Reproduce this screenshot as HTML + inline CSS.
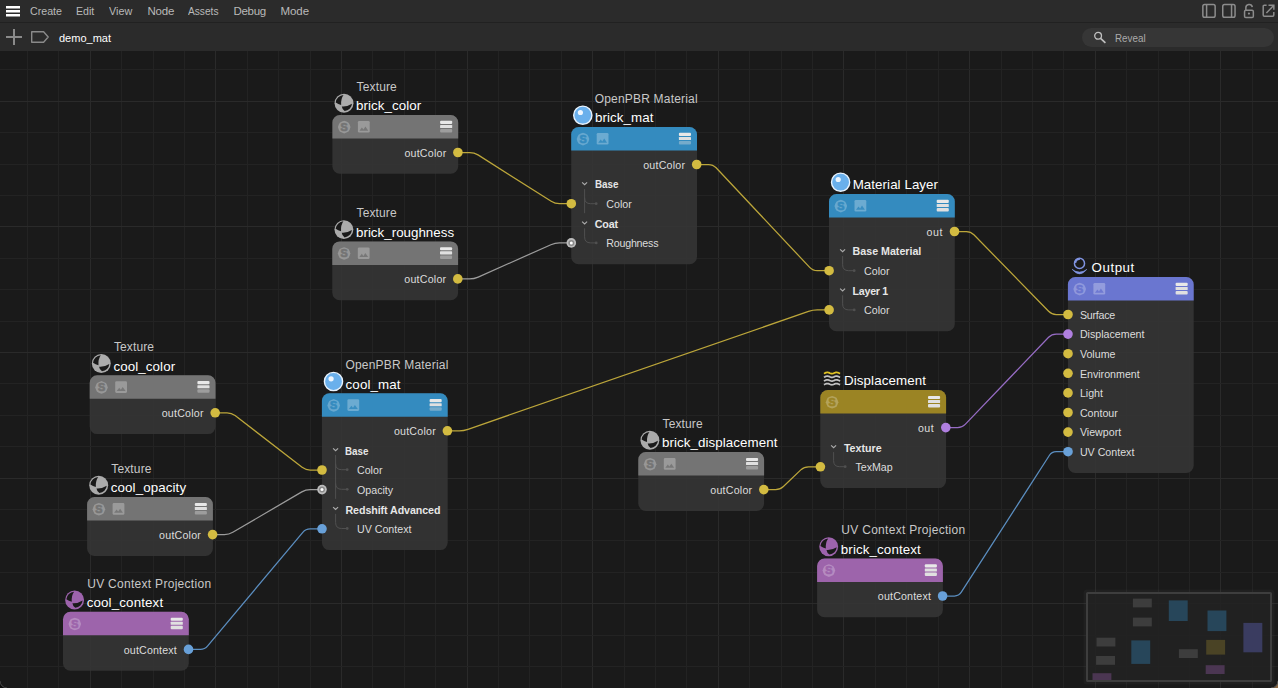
<!DOCTYPE html><html><head><meta charset="utf-8"><title>Node Editor - demo_mat</title><style>
html,body{margin:0;padding:0;background:#1a1a1a;overflow:hidden}
body{width:1278px;height:688px;position:relative;font-family:"Liberation Sans", sans-serif;}
.t{position:absolute;line-height:0;white-space:nowrap}
#menubar{position:absolute;left:0;top:0;width:1278px;height:22px;background:#2b2b2b}
#sep{position:absolute;left:0;top:22px;width:1278px;height:1px;background:#212121}
#toolbar{position:absolute;left:0;top:23px;width:1278px;height:28px;background:#2b2b2b}
#canvas{position:absolute;left:0;top:0;width:1278px;height:688px;overflow:hidden}
svg.full{position:absolute;left:0;top:0}
.node{position:absolute}
.hd{position:absolute;left:0;top:0;right:0;height:23.4px}
.ic{position:absolute}
#search{position:absolute;left:1082px;top:28px;width:192px;height:19px;border-radius:9.5px;background:#363636}
#minimap{position:absolute;left:1086px;top:592px;width:186px;height:90px;box-sizing:border-box;border:2px solid #3e3e3e;border-radius:1.5px;background:rgba(34,34,34,.9);overflow:hidden;box-shadow:0 0 0 2.5px rgba(70,70,70,.16)}

</style></head><body>
<div id="canvas">
<svg class="full" width="1278" height="688"><rect x="27" y="51" width="1" height="637" fill="#232323"/><rect x="58" y="51" width="1" height="637" fill="#232323"/><rect x="90" y="51" width="1" height="637" fill="#2a2a2a"/><rect x="121" y="51" width="1" height="637" fill="#232323"/><rect x="153" y="51" width="1" height="637" fill="#232323"/><rect x="184" y="51" width="1" height="637" fill="#232323"/><rect x="215" y="51" width="1" height="637" fill="#2a2a2a"/><rect x="247" y="51" width="1" height="637" fill="#232323"/><rect x="278" y="51" width="1" height="637" fill="#232323"/><rect x="310" y="51" width="1" height="637" fill="#232323"/><rect x="341" y="51" width="1" height="637" fill="#2a2a2a"/><rect x="372" y="51" width="1" height="637" fill="#232323"/><rect x="404" y="51" width="1" height="637" fill="#232323"/><rect x="435" y="51" width="1" height="637" fill="#232323"/><rect x="467" y="51" width="1" height="637" fill="#2a2a2a"/><rect x="498" y="51" width="1" height="637" fill="#232323"/><rect x="529" y="51" width="1" height="637" fill="#232323"/><rect x="561" y="51" width="1" height="637" fill="#232323"/><rect x="592" y="51" width="1" height="637" fill="#2a2a2a"/><rect x="624" y="51" width="1" height="637" fill="#232323"/><rect x="655" y="51" width="1" height="637" fill="#232323"/><rect x="686" y="51" width="1" height="637" fill="#232323"/><rect x="718" y="51" width="1" height="637" fill="#2a2a2a"/><rect x="749" y="51" width="1" height="637" fill="#232323"/><rect x="781" y="51" width="1" height="637" fill="#232323"/><rect x="812" y="51" width="1" height="637" fill="#232323"/><rect x="843" y="51" width="1" height="637" fill="#2a2a2a"/><rect x="875" y="51" width="1" height="637" fill="#232323"/><rect x="906" y="51" width="1" height="637" fill="#232323"/><rect x="938" y="51" width="1" height="637" fill="#232323"/><rect x="969" y="51" width="1" height="637" fill="#2a2a2a"/><rect x="1001" y="51" width="1" height="637" fill="#232323"/><rect x="1032" y="51" width="1" height="637" fill="#232323"/><rect x="1063" y="51" width="1" height="637" fill="#232323"/><rect x="1095" y="51" width="1" height="637" fill="#2a2a2a"/><rect x="1126" y="51" width="1" height="637" fill="#232323"/><rect x="1158" y="51" width="1" height="637" fill="#232323"/><rect x="1189" y="51" width="1" height="637" fill="#232323"/><rect x="1220" y="51" width="1" height="637" fill="#2a2a2a"/><rect x="1252" y="51" width="1" height="637" fill="#232323"/><rect x="0" y="69" width="1278" height="1" fill="#232323"/><rect x="0" y="101" width="1278" height="1" fill="#2a2a2a"/><rect x="0" y="132" width="1278" height="1" fill="#232323"/><rect x="0" y="164" width="1278" height="1" fill="#232323"/><rect x="0" y="195" width="1278" height="1" fill="#232323"/><rect x="0" y="226" width="1278" height="1" fill="#2a2a2a"/><rect x="0" y="258" width="1278" height="1" fill="#232323"/><rect x="0" y="289" width="1278" height="1" fill="#232323"/><rect x="0" y="321" width="1278" height="1" fill="#232323"/><rect x="0" y="352" width="1278" height="1" fill="#2a2a2a"/><rect x="0" y="383" width="1278" height="1" fill="#232323"/><rect x="0" y="415" width="1278" height="1" fill="#232323"/><rect x="0" y="446" width="1278" height="1" fill="#232323"/><rect x="0" y="478" width="1278" height="1" fill="#2a2a2a"/><rect x="0" y="509" width="1278" height="1" fill="#232323"/><rect x="0" y="540" width="1278" height="1" fill="#232323"/><rect x="0" y="572" width="1278" height="1" fill="#232323"/><rect x="0" y="603" width="1278" height="1" fill="#2a2a2a"/><rect x="0" y="635" width="1278" height="1" fill="#232323"/><rect x="0" y="666" width="1278" height="1" fill="#232323"/></svg>
<svg class="full" width="1278" height="688"><rect x="332.40" y="115.00" width="125.80" height="58.80" rx="7.5" fill="#353535" fill-opacity=".88"/><path d="M332.40 138.50 V122.50 A7.5 7.5 0 0 1 339.90 115.00 H450.70 A7.5 7.5 0 0 1 458.20 122.50 V138.50Z" fill="#747474"/><rect x="332.30" y="241.40" width="125.80" height="58.80" rx="7.5" fill="#353535" fill-opacity=".88"/><path d="M332.30 264.90 V248.90 A7.5 7.5 0 0 1 339.80 241.40 H450.60 A7.5 7.5 0 0 1 458.10 248.90 V264.90Z" fill="#747474"/><rect x="571.20" y="127.00" width="125.80" height="137.20" rx="7.5" fill="#353535" fill-opacity=".88"/><path d="M571.20 150.50 V134.50 A7.5 7.5 0 0 1 578.70 127.00 H689.50 A7.5 7.5 0 0 1 697.00 134.50 V150.50Z" fill="#348bbf"/><rect x="829.00" y="194.00" width="125.80" height="137.20" rx="7.5" fill="#353535" fill-opacity=".88"/><path d="M829.00 217.50 V201.50 A7.5 7.5 0 0 1 836.50 194.00 H947.30 A7.5 7.5 0 0 1 954.80 201.50 V217.50Z" fill="#348bbf"/><rect x="1067.90" y="277.00" width="125.80" height="196.00" rx="7.5" fill="#353535" fill-opacity=".88"/><path d="M1067.90 300.50 V284.50 A7.5 7.5 0 0 1 1075.40 277.00 H1186.20 A7.5 7.5 0 0 1 1193.70 284.50 V300.50Z" fill="#6a76d0"/><rect x="89.70" y="375.30" width="125.80" height="58.80" rx="7.5" fill="#353535" fill-opacity=".88"/><path d="M89.70 398.80 V382.80 A7.5 7.5 0 0 1 97.20 375.30 H208.00 A7.5 7.5 0 0 1 215.50 382.80 V398.80Z" fill="#747474"/><rect x="87.10" y="497.10" width="125.80" height="58.80" rx="7.5" fill="#353535" fill-opacity=".88"/><path d="M87.10 520.60 V504.60 A7.5 7.5 0 0 1 94.60 497.10 H205.40 A7.5 7.5 0 0 1 212.90 504.60 V520.60Z" fill="#747474"/><rect x="63.00" y="611.85" width="125.80" height="58.80" rx="7.5" fill="#353535" fill-opacity=".88"/><path d="M63.00 635.35 V619.35 A7.5 7.5 0 0 1 70.50 611.85 H181.30 A7.5 7.5 0 0 1 188.80 619.35 V635.35Z" fill="#9d64ab"/><rect x="321.90" y="393.30" width="125.80" height="156.80" rx="7.5" fill="#353535" fill-opacity=".88"/><path d="M321.90 416.80 V400.80 A7.5 7.5 0 0 1 329.40 393.30 H440.20 A7.5 7.5 0 0 1 447.70 400.80 V416.80Z" fill="#348bbf"/><rect x="820.30" y="390.10" width="125.80" height="98.00" rx="7.5" fill="#353535" fill-opacity=".88"/><path d="M820.30 413.60 V397.60 A7.5 7.5 0 0 1 827.80 390.10 H938.60 A7.5 7.5 0 0 1 946.10 397.60 V413.60Z" fill="#9b8424"/><rect x="638.30" y="452.10" width="125.80" height="58.80" rx="7.5" fill="#353535" fill-opacity=".88"/><path d="M638.30 475.60 V459.60 A7.5 7.5 0 0 1 645.80 452.10 H756.60 A7.5 7.5 0 0 1 764.10 459.60 V475.60Z" fill="#747474"/><rect x="817.10" y="558.50" width="125.80" height="58.80" rx="7.5" fill="#353535" fill-opacity=".88"/><path d="M817.10 582.00 V566.00 A7.5 7.5 0 0 1 824.60 558.50 H935.40 A7.5 7.5 0 0 1 942.90 566.00 V582.00Z" fill="#9d64ab"/></svg>
<div class="node" style="left:332.4px;top:115px;width:125.8px;height:58.8px"><div class="hd"></div><span class="t" style="right:11.8px;top:38.00px;font-size:10.67px;color:#dcdcdc;letter-spacing:0.215px;">outColor</span></div><span class="t" style="left:356.60px;top:87.00px;font-size:12px;color:#c8c8c8;letter-spacing:0.134px;">Texture</span><span class="t" style="left:356.10px;top:105.50px;font-size:13.33px;color:#ffffff;letter-spacing:0.059px;">brick_color</span><div class="node" style="left:332.3px;top:241.4px;width:125.8px;height:58.8px"><div class="hd"></div><span class="t" style="right:11.8px;top:37.60px;font-size:10.67px;color:#dcdcdc;letter-spacing:0.215px;">outColor</span></div><span class="t" style="left:356.50px;top:213.00px;font-size:12px;color:#c8c8c8;letter-spacing:0.134px;">Texture</span><span class="t" style="left:356.00px;top:232.50px;font-size:13.33px;color:#ffffff;letter-spacing:0.020px;">brick_roughness</span><div class="node" style="left:571.2px;top:127px;width:125.8px;height:137.2px"><div class="hd"></div><span class="t" style="right:11.8px;top:38.00px;font-size:10.67px;color:#dcdcdc;letter-spacing:0.215px;">outColor</span><span class="t" style="left:23.60px;top:57.00px;font-size:10.67px;color:#e6e6e6;font-weight:700;transform:scaleX(0.9221);transform-origin:0 0;">Base</span><span class="t" style="left:35.10px;top:77.00px;font-size:10.67px;color:#dcdcdc;">Color</span><span class="t" style="left:23.60px;top:97.00px;font-size:10.67px;color:#e6e6e6;font-weight:700;letter-spacing:-0.122px;">Coat</span><span class="t" style="left:35.10px;top:116.00px;font-size:10.67px;color:#dcdcdc;letter-spacing:-0.214px;">Roughness</span><svg class="ic" style="left:0;top:0" width="125.8" height="137.2" fill="none" stroke="#505050" stroke-width="1"><path d="M11.1 55.4 L13.6 57.7 L16.1 55.4" stroke="#acacac" stroke-width="1.15"/><path d="M13.6 62.1 V70.7 Q13.6 76.7 19.6 76.7 H24"/><path d="M13.6 70.2 V86.2"/><circle cx="25.2" cy="76.7" r="1.4" fill="#505050" stroke="none"/><path d="M11.1 94.6 L13.6 96.9 L16.1 94.6" stroke="#acacac" stroke-width="1.15"/><path d="M13.6 101.3 V109.9 Q13.6 115.9 19.6 115.9 H24"/><circle cx="25.2" cy="115.9" r="1.4" fill="#505050" stroke="none"/></svg></div><span class="t" style="left:594.70px;top:99.00px;font-size:12px;color:#c8c8c8;letter-spacing:0.191px;">OpenPBR Material</span><span class="t" style="left:594.90px;top:117.50px;font-size:13.33px;color:#ffffff;letter-spacing:0.091px;">brick_mat</span><div class="node" style="left:829px;top:194.0px;width:125.8px;height:137.2px"><div class="hd"></div><span class="t" style="right:11.8px;top:38.00px;font-size:10.67px;color:#dcdcdc;letter-spacing:0.524px;">out</span><span class="t" style="left:23.60px;top:57.00px;font-size:10.67px;color:#e6e6e6;font-weight:700;">Base Material</span><span class="t" style="left:35.10px;top:77.00px;font-size:10.67px;color:#dcdcdc;">Color</span><span class="t" style="left:23.60px;top:97.00px;font-size:10.67px;color:#e6e6e6;font-weight:700;letter-spacing:-0.275px;">Layer 1</span><span class="t" style="left:35.10px;top:116.00px;font-size:10.67px;color:#dcdcdc;">Color</span><svg class="ic" style="left:0;top:0" width="125.8" height="137.2" fill="none" stroke="#505050" stroke-width="1"><path d="M11.1 55.4 L13.6 57.7 L16.1 55.4" stroke="#acacac" stroke-width="1.15"/><path d="M13.6 62.1 V70.7 Q13.6 76.7 19.6 76.7 H24"/><circle cx="25.2" cy="76.7" r="1.4" fill="#505050" stroke="none"/><path d="M11.1 94.6 L13.6 96.9 L16.1 94.6" stroke="#acacac" stroke-width="1.15"/><path d="M13.6 101.3 V109.9 Q13.6 115.9 19.6 115.9 H24"/><circle cx="25.2" cy="115.9" r="1.4" fill="#505050" stroke="none"/></svg></div><span class="t" style="left:852.70px;top:184.50px;font-size:13.33px;color:#ffffff;letter-spacing:0.068px;">Material Layer</span><div class="node" style="left:1067.9px;top:277.0px;width:125.8px;height:196.0px"><div class="hd"></div><span class="t" style="left:12.00px;top:38.00px;font-size:10.67px;color:#dcdcdc;letter-spacing:-0.219px;">Surface</span><span class="t" style="left:12.00px;top:57.00px;font-size:10.67px;color:#dcdcdc;">Displacement</span><span class="t" style="left:12.00px;top:77.00px;font-size:10.67px;color:#dcdcdc;">Volume</span><span class="t" style="left:12.00px;top:97.00px;font-size:10.67px;color:#dcdcdc;">Environment</span><span class="t" style="left:12.00px;top:116.00px;font-size:10.67px;color:#dcdcdc;">Light</span><span class="t" style="left:12.00px;top:136.00px;font-size:10.67px;color:#dcdcdc;">Contour</span><span class="t" style="left:12.00px;top:155.00px;font-size:10.67px;color:#dcdcdc;">Viewport</span><span class="t" style="left:12.00px;top:175.00px;font-size:10.67px;color:#dcdcdc;">UV Context</span></div><span class="t" style="left:1091.60px;top:267.50px;font-size:13.33px;color:#ffffff;letter-spacing:0.531px;">Output</span><div class="node" style="left:89.7px;top:375.3px;width:125.8px;height:58.8px"><div class="hd"></div><span class="t" style="right:11.8px;top:37.70px;font-size:10.67px;color:#dcdcdc;letter-spacing:0.215px;">outColor</span></div><span class="t" style="left:113.90px;top:347.00px;font-size:12px;color:#c8c8c8;letter-spacing:0.134px;">Texture</span><span class="t" style="left:113.40px;top:366.50px;font-size:13.33px;color:#ffffff;letter-spacing:0.113px;">cool_color</span><div class="node" style="left:87.1px;top:497.1px;width:125.8px;height:58.8px"><div class="hd"></div><span class="t" style="right:11.8px;top:37.90px;font-size:10.67px;color:#dcdcdc;letter-spacing:0.215px;">outColor</span></div><span class="t" style="left:111.30px;top:469.00px;font-size:12px;color:#c8c8c8;letter-spacing:0.134px;">Texture</span><span class="t" style="left:110.80px;top:487.50px;font-size:13.33px;color:#ffffff;letter-spacing:0.109px;">cool_opacity</span><div class="node" style="left:63px;top:611.85px;width:125.8px;height:58.8px"><div class="hd"></div><span class="t" style="right:11.8px;top:38.15px;font-size:10.67px;color:#dcdcdc;letter-spacing:0.175px;">outContext</span></div><span class="t" style="left:87.20px;top:584.00px;font-size:12px;color:#c8c8c8;letter-spacing:0.292px;">UV Context Projection</span><span class="t" style="left:86.70px;top:602.50px;font-size:13.33px;color:#ffffff;letter-spacing:0.146px;">cool_context</span><div class="node" style="left:321.9px;top:393.3px;width:125.8px;height:156.8px"><div class="hd"></div><span class="t" style="right:11.8px;top:37.70px;font-size:10.67px;color:#dcdcdc;letter-spacing:0.215px;">outColor</span><span class="t" style="left:23.60px;top:57.70px;font-size:10.67px;color:#e6e6e6;font-weight:700;transform:scaleX(0.9221);transform-origin:0 0;">Base</span><span class="t" style="left:35.10px;top:76.70px;font-size:10.67px;color:#dcdcdc;">Color</span><span class="t" style="left:35.10px;top:96.70px;font-size:10.67px;color:#dcdcdc;">Opacity</span><span class="t" style="left:23.60px;top:116.70px;font-size:10.67px;color:#e6e6e6;font-weight:700;letter-spacing:-0.072px;">Redshift Advanced</span><span class="t" style="left:35.10px;top:135.70px;font-size:10.67px;color:#dcdcdc;">UV Context</span><svg class="ic" style="left:0;top:0" width="125.8" height="156.8" fill="none" stroke="#505050" stroke-width="1"><path d="M11.1 55.4 L13.6 57.7 L16.1 55.4" stroke="#acacac" stroke-width="1.15"/><path d="M13.6 62.1 V70.7 Q13.6 76.7 19.6 76.7 H24"/><circle cx="25.2" cy="76.7" r="1.4" fill="#505050" stroke="none"/><path d="M13.6 70.2 V90.3 Q13.6 96.3 19.6 96.3 H24"/><path d="M13.6 89.8 V105.8"/><circle cx="25.2" cy="96.3" r="1.4" fill="#505050" stroke="none"/><path d="M11.1 114.2 L13.6 116.5 L16.1 114.2" stroke="#acacac" stroke-width="1.15"/><path d="M13.6 120.9 V129.5 Q13.6 135.5 19.6 135.5 H24"/><circle cx="25.2" cy="135.5" r="1.4" fill="#505050" stroke="none"/></svg></div><span class="t" style="left:345.40px;top:365.00px;font-size:12px;color:#c8c8c8;letter-spacing:0.191px;">OpenPBR Material</span><span class="t" style="left:345.60px;top:384.50px;font-size:13.33px;color:#ffffff;letter-spacing:0.113px;">cool_mat</span><div class="node" style="left:820.3px;top:390.1px;width:125.8px;height:98.0px"><div class="hd"></div><span class="t" style="right:11.8px;top:37.90px;font-size:10.67px;color:#dcdcdc;letter-spacing:0.524px;">out</span><span class="t" style="left:23.60px;top:57.90px;font-size:10.67px;color:#e6e6e6;font-weight:700;">Texture</span><span class="t" style="left:35.10px;top:76.90px;font-size:10.67px;color:#dcdcdc;">TexMap</span><svg class="ic" style="left:0;top:0" width="125.8" height="98.0" fill="none" stroke="#505050" stroke-width="1"><path d="M11.1 55.4 L13.6 57.7 L16.1 55.4" stroke="#acacac" stroke-width="1.15"/><path d="M13.6 62.1 V70.7 Q13.6 76.7 19.6 76.7 H24"/><circle cx="25.2" cy="76.7" r="1.4" fill="#505050" stroke="none"/></svg></div><span class="t" style="left:844.00px;top:380.50px;font-size:13.33px;color:#ffffff;letter-spacing:0.113px;">Displacement</span><div class="node" style="left:638.3px;top:452.1px;width:125.8px;height:58.8px"><div class="hd"></div><span class="t" style="right:11.8px;top:37.90px;font-size:10.67px;color:#dcdcdc;letter-spacing:0.215px;">outColor</span></div><span class="t" style="left:662.50px;top:424.00px;font-size:12px;color:#c8c8c8;letter-spacing:0.134px;">Texture</span><span class="t" style="left:662.00px;top:442.50px;font-size:13.33px;color:#ffffff;letter-spacing:0.078px;">brick_displacement</span><div class="node" style="left:817.1px;top:558.5px;width:125.8px;height:58.8px"><div class="hd"></div><span class="t" style="right:11.8px;top:37.50px;font-size:10.67px;color:#dcdcdc;letter-spacing:0.175px;">outContext</span></div><span class="t" style="left:841.30px;top:530.00px;font-size:12px;color:#c8c8c8;letter-spacing:0.292px;">UV Context Projection</span><span class="t" style="left:840.80px;top:549.50px;font-size:13.33px;color:#ffffff;letter-spacing:0.121px;">brick_context</span>
<svg class="full" width="1278" height="688" style="pointer-events:none"><g fill="none" stroke-width="1.25"><path d="M457.9 152.5 H469.7 Q474.2 152.5 478.0 154.9 L551.2 201.3 Q555.0 203.7 559.5 203.7 H571.3" stroke="#bca63a"/><path d="M457.8 278.9 H469.6 Q474.1 278.9 478.2 277.1 L550.9 244.7 Q555.0 242.9 559.5 242.9 H571.3" stroke="#9c9c9c"/><path d="M696.7 164.5 H708.5 Q713.0 164.5 716.1 167.8 L809.7 267.4 Q812.8 270.7 817.3 270.7 H829.1" stroke="#bca63a"/><path d="M447.4 430.8 H459.2 Q463.7 430.8 468.0 429.3 L808.5 311.4 Q812.8 309.9 817.3 309.9 H829.1" stroke="#bca63a"/><path d="M954.5 231.5 H966.3 Q970.8 231.5 973.9 234.7 L1048.6 311.3 Q1051.7 314.5 1056.2 314.5 H1068.0" stroke="#bca63a"/><path d="M945.8 427.6 H957.6 Q962.1 427.6 965.2 424.4 L1048.6 337.3 Q1051.7 334.1 1056.2 334.1 H1068.0" stroke="#966cc4"/><path d="M942.6 596.0 H954.4 Q958.9 596.0 961.3 592.2 L1049.3 455.5 Q1051.7 451.7 1056.2 451.7 H1068.0" stroke="#5b8ec0"/><path d="M215.2 412.8 H227.0 Q231.5 412.8 235.1 415.5 L302.1 467.3 Q305.7 470.0 310.2 470.0 H322.0" stroke="#bca63a"/><path d="M212.6 534.6 H224.4 Q228.9 534.6 232.8 532.3 L301.8 491.9 Q305.7 489.6 310.2 489.6 H322.0" stroke="#9c9c9c"/><path d="M188.5 649.4 H200.3 Q204.8 649.4 207.7 645.9 L302.8 532.3 Q305.7 528.8 310.2 528.8 H322.0" stroke="#5b8ec0"/><path d="M763.8 489.6 H775.6 Q780.1 489.6 783.4 486.5 L800.8 469.9 Q804.1 466.8 808.6 466.8 H820.4" stroke="#bca63a"/></g><circle cx="457.9" cy="152.5" r="4.8" fill="#d3bb41"/><circle cx="457.8" cy="278.9" r="4.8" fill="#d3bb41"/><circle cx="696.7" cy="164.5" r="4.8" fill="#d3bb41"/><circle cx="571.3" cy="203.7" r="4.8" fill="#d3bb41"/><circle cx="571.3" cy="242.9" r="4.8" fill="#bdbdbd"/><circle cx="571.3" cy="242.9" r="3" fill="#8a8a8a"/><circle cx="571.3" cy="242.9" r="1.5" fill="#fff"/><circle cx="954.5" cy="231.5" r="4.8" fill="#d3bb41"/><circle cx="829.1" cy="270.7" r="4.8" fill="#d3bb41"/><circle cx="829.1" cy="309.9" r="4.8" fill="#d3bb41"/><circle cx="1068.0" cy="314.5" r="4.8" fill="#d3bb41"/><circle cx="1068.0" cy="334.1" r="4.8" fill="#b07fe0"/><circle cx="1068.0" cy="353.7" r="4.8" fill="#d3bb41"/><circle cx="1068.0" cy="373.3" r="4.8" fill="#d3bb41"/><circle cx="1068.0" cy="392.9" r="4.8" fill="#d3bb41"/><circle cx="1068.0" cy="412.5" r="4.8" fill="#d3bb41"/><circle cx="1068.0" cy="432.1" r="4.8" fill="#d3bb41"/><circle cx="1068.0" cy="451.7" r="4.8" fill="#68a0d8"/><circle cx="215.2" cy="412.8" r="4.8" fill="#d3bb41"/><circle cx="212.6" cy="534.6" r="4.8" fill="#d3bb41"/><circle cx="188.5" cy="649.4" r="4.8" fill="#68a0d8"/><circle cx="447.4" cy="430.8" r="4.8" fill="#d3bb41"/><circle cx="322.0" cy="470.0" r="4.8" fill="#d3bb41"/><circle cx="322.0" cy="489.6" r="4.8" fill="#bdbdbd"/><circle cx="322.0" cy="489.6" r="3" fill="#8a8a8a"/><circle cx="322.0" cy="489.6" r="1.5" fill="#fff"/><circle cx="322.0" cy="528.8" r="4.8" fill="#68a0d8"/><circle cx="945.8" cy="427.6" r="4.8" fill="#b07fe0"/><circle cx="820.4" cy="466.8" r="4.8" fill="#d3bb41"/><circle cx="763.8" cy="489.6" r="4.8" fill="#d3bb41"/><circle cx="942.6" cy="596.0" r="4.8" fill="#68a0d8"/><polygon points="344.20,120.80 346.48,121.60 348.65,122.65 349.70,124.82 350.50,127.10 349.70,129.38 348.65,131.55 346.48,132.60 344.20,133.40 341.92,132.60 339.75,131.55 338.70,129.38 337.90,127.10 338.70,124.82 339.75,122.65 341.92,121.60" fill="#fff" fill-opacity=".25"/><text x="344.20" y="130.85" text-anchor="middle" font-size="10.8" font-weight="700" fill="#747474" stroke="#747474" stroke-width=".7" font-family='"Liberation Sans", sans-serif'>S</text><rect x="357.90" y="121.00" width="11.8" height="11.6" rx="1.3" fill="#fff" fill-opacity=".28"/><path transform="translate(357.90 121.00)" d="M1.5 9.7 L4 6.4 L5.6 8.5 L7.5 5.6 L10.4 9.7Z" fill="#747474" fill-opacity=".9"/><rect x="440.10" y="120.80" width="12.1" height="3.1" rx="1" fill="#e8e8e8"/><rect x="440.10" y="124.90" width="12.1" height="3.1" rx=".6" fill="#e0e0e0"/><rect x="440.10" y="129.00" width="12.1" height="3.5" rx="1" fill="#e0e0e0" fill-opacity=".38"/><g transform="translate(334.00 93.20)"><circle cx="10" cy="10" r="9.45" fill="#ababab"/><path fill="#1a1a1a" d="M9.5 1.75 Q6.7 5.6 7.15 11.7 Q4.2 11 1.75 9.2 A8.3 8.3 0 0 1 9.5 1.75Z"/><path fill="#1a1a1a" d="M7.8 13.2 Q13.1 13.7 18 10.5 A8 8 0 0 1 10.7 17.8 Q8.2 16.2 7.8 13.2Z"/></g><polygon points="344.10,247.20 346.38,248.00 348.55,249.05 349.60,251.22 350.40,253.50 349.60,255.78 348.55,257.95 346.38,259.00 344.10,259.80 341.82,259.00 339.65,257.95 338.60,255.78 337.80,253.50 338.60,251.22 339.65,249.05 341.82,248.00" fill="#fff" fill-opacity=".25"/><text x="344.10" y="257.25" text-anchor="middle" font-size="10.8" font-weight="700" fill="#747474" stroke="#747474" stroke-width=".7" font-family='"Liberation Sans", sans-serif'>S</text><rect x="357.80" y="247.40" width="11.8" height="11.6" rx="1.3" fill="#fff" fill-opacity=".28"/><path transform="translate(357.80 247.40)" d="M1.5 9.7 L4 6.4 L5.6 8.5 L7.5 5.6 L10.4 9.7Z" fill="#747474" fill-opacity=".9"/><rect x="440.00" y="247.20" width="12.1" height="3.1" rx="1" fill="#e8e8e8"/><rect x="440.00" y="251.30" width="12.1" height="3.1" rx=".6" fill="#e0e0e0"/><rect x="440.00" y="255.40" width="12.1" height="3.5" rx="1" fill="#e0e0e0" fill-opacity=".38"/><g transform="translate(333.90 219.60)"><circle cx="10" cy="10" r="9.45" fill="#ababab"/><path fill="#1a1a1a" d="M9.5 1.75 Q6.7 5.6 7.15 11.7 Q4.2 11 1.75 9.2 A8.3 8.3 0 0 1 9.5 1.75Z"/><path fill="#1a1a1a" d="M7.8 13.2 Q13.1 13.7 18 10.5 A8 8 0 0 1 10.7 17.8 Q8.2 16.2 7.8 13.2Z"/></g><polygon points="583.00,132.80 585.28,133.60 587.45,134.65 588.50,136.82 589.30,139.10 588.50,141.38 587.45,143.55 585.28,144.60 583.00,145.40 580.72,144.60 578.55,143.55 577.50,141.38 576.70,139.10 577.50,136.82 578.55,134.65 580.72,133.60" fill="#fff" fill-opacity=".25"/><text x="583.00" y="142.85" text-anchor="middle" font-size="10.8" font-weight="700" fill="#348bbf" stroke="#348bbf" stroke-width=".7" font-family='"Liberation Sans", sans-serif'>S</text><rect x="596.70" y="133.00" width="11.8" height="11.6" rx="1.3" fill="#fff" fill-opacity=".28"/><path transform="translate(596.70 133.00)" d="M1.5 9.7 L4 6.4 L5.6 8.5 L7.5 5.6 L10.4 9.7Z" fill="#348bbf" fill-opacity=".9"/><rect x="678.90" y="132.80" width="12.1" height="3.1" rx="1" fill="#e8e8e8"/><rect x="678.90" y="136.90" width="12.1" height="3.1" rx=".6" fill="#e0e0e0"/><rect x="678.90" y="141.00" width="12.1" height="3.5" rx="1" fill="#e0e0e0" fill-opacity=".38"/><circle cx="582.80" cy="115.20" r="9.1" fill="#6ab0ec" stroke="#e9f3fd" stroke-width="1.4"/><circle cx="580.40" cy="112.50" r="2.6" fill="#eef6ff"/><polygon points="840.80,199.80 843.08,200.60 845.25,201.65 846.30,203.82 847.10,206.10 846.30,208.38 845.25,210.55 843.08,211.60 840.80,212.40 838.52,211.60 836.35,210.55 835.30,208.38 834.50,206.10 835.30,203.82 836.35,201.65 838.52,200.60" fill="#fff" fill-opacity=".25"/><text x="840.80" y="209.85" text-anchor="middle" font-size="10.8" font-weight="700" fill="#348bbf" stroke="#348bbf" stroke-width=".7" font-family='"Liberation Sans", sans-serif'>S</text><rect x="854.50" y="200.00" width="11.8" height="11.6" rx="1.3" fill="#fff" fill-opacity=".28"/><path transform="translate(854.50 200.00)" d="M1.5 9.7 L4 6.4 L5.6 8.5 L7.5 5.6 L10.4 9.7Z" fill="#348bbf" fill-opacity=".9"/><rect x="936.70" y="199.80" width="12.1" height="3.1" rx="1" fill="#e8e8e8"/><rect x="936.70" y="203.90" width="12.1" height="3.1" rx=".6" fill="#e0e0e0"/><rect x="936.70" y="208.00" width="12.1" height="3.5" rx="1" fill="#e0e0e0"/><circle cx="840.60" cy="182.20" r="9.1" fill="#6ab0ec" stroke="#e9f3fd" stroke-width="1.4"/><circle cx="838.20" cy="179.50" r="2.6" fill="#eef6ff"/><polygon points="1079.70,282.80 1081.98,283.60 1084.15,284.65 1085.20,286.82 1086.00,289.10 1085.20,291.38 1084.15,293.55 1081.98,294.60 1079.70,295.40 1077.42,294.60 1075.25,293.55 1074.20,291.38 1073.40,289.10 1074.20,286.82 1075.25,284.65 1077.42,283.60" fill="#fff" fill-opacity=".25"/><text x="1079.70" y="292.85" text-anchor="middle" font-size="10.8" font-weight="700" fill="#6a76d0" stroke="#6a76d0" stroke-width=".7" font-family='"Liberation Sans", sans-serif'>S</text><rect x="1093.40" y="283.00" width="11.8" height="11.6" rx="1.3" fill="#fff" fill-opacity=".28"/><path transform="translate(1093.40 283.00)" d="M1.5 9.7 L4 6.4 L5.6 8.5 L7.5 5.6 L10.4 9.7Z" fill="#6a76d0" fill-opacity=".9"/><rect x="1175.60" y="282.80" width="12.1" height="3.1" rx="1" fill="#e8e8e8"/><rect x="1175.60" y="286.90" width="12.1" height="3.1" rx=".6" fill="#e0e0e0"/><rect x="1175.60" y="291.00" width="12.1" height="3.5" rx="1" fill="#e0e0e0"/><circle cx="1079.50" cy="263.40" r="5.05" fill="none" stroke="#8094e2" stroke-width="1.5"/><path d="M1075.20 262.80 A4.4 4.4 0 0 1 1079.90 259.00" fill="none" stroke="#8094e2" stroke-width="2.1"/><path d="M1072.00 269.20 Q1079.50 275.00 1087.00 269.20 Q1079.50 278.60 1072.00 269.20Z" fill="#8094e2" stroke="#8094e2" stroke-width=".5"/><polygon points="101.50,381.10 103.78,381.90 105.95,382.95 107.00,385.12 107.80,387.40 107.00,389.68 105.95,391.85 103.78,392.90 101.50,393.70 99.22,392.90 97.05,391.85 96.00,389.68 95.20,387.40 96.00,385.12 97.05,382.95 99.22,381.90" fill="#fff" fill-opacity=".25"/><text x="101.50" y="391.15" text-anchor="middle" font-size="10.8" font-weight="700" fill="#747474" stroke="#747474" stroke-width=".7" font-family='"Liberation Sans", sans-serif'>S</text><rect x="115.20" y="381.30" width="11.8" height="11.6" rx="1.3" fill="#fff" fill-opacity=".28"/><path transform="translate(115.20 381.30)" d="M1.5 9.7 L4 6.4 L5.6 8.5 L7.5 5.6 L10.4 9.7Z" fill="#747474" fill-opacity=".9"/><rect x="197.40" y="381.10" width="12.1" height="3.1" rx="1" fill="#e8e8e8"/><rect x="197.40" y="385.20" width="12.1" height="3.1" rx=".6" fill="#e0e0e0"/><rect x="197.40" y="389.30" width="12.1" height="3.5" rx="1" fill="#e0e0e0" fill-opacity=".38"/><g transform="translate(91.30 353.50)"><circle cx="10" cy="10" r="9.45" fill="#ababab"/><path fill="#1a1a1a" d="M9.5 1.75 Q6.7 5.6 7.15 11.7 Q4.2 11 1.75 9.2 A8.3 8.3 0 0 1 9.5 1.75Z"/><path fill="#1a1a1a" d="M7.8 13.2 Q13.1 13.7 18 10.5 A8 8 0 0 1 10.7 17.8 Q8.2 16.2 7.8 13.2Z"/></g><polygon points="98.90,502.90 101.18,503.70 103.35,504.75 104.40,506.92 105.20,509.20 104.40,511.48 103.35,513.65 101.18,514.70 98.90,515.50 96.62,514.70 94.45,513.65 93.40,511.48 92.60,509.20 93.40,506.92 94.45,504.75 96.62,503.70" fill="#fff" fill-opacity=".25"/><text x="98.90" y="512.95" text-anchor="middle" font-size="10.8" font-weight="700" fill="#747474" stroke="#747474" stroke-width=".7" font-family='"Liberation Sans", sans-serif'>S</text><rect x="112.60" y="503.10" width="11.8" height="11.6" rx="1.3" fill="#fff" fill-opacity=".28"/><path transform="translate(112.60 503.10)" d="M1.5 9.7 L4 6.4 L5.6 8.5 L7.5 5.6 L10.4 9.7Z" fill="#747474" fill-opacity=".9"/><rect x="194.80" y="502.90" width="12.1" height="3.1" rx="1" fill="#e8e8e8"/><rect x="194.80" y="507.00" width="12.1" height="3.1" rx=".6" fill="#e0e0e0"/><rect x="194.80" y="511.10" width="12.1" height="3.5" rx="1" fill="#e0e0e0" fill-opacity=".38"/><g transform="translate(88.70 475.30)"><circle cx="10" cy="10" r="9.45" fill="#ababab"/><path fill="#1a1a1a" d="M9.5 1.75 Q6.7 5.6 7.15 11.7 Q4.2 11 1.75 9.2 A8.3 8.3 0 0 1 9.5 1.75Z"/><path fill="#1a1a1a" d="M7.8 13.2 Q13.1 13.7 18 10.5 A8 8 0 0 1 10.7 17.8 Q8.2 16.2 7.8 13.2Z"/></g><polygon points="74.80,617.65 77.08,618.45 79.25,619.50 80.30,621.67 81.10,623.95 80.30,626.23 79.25,628.40 77.08,629.45 74.80,630.25 72.52,629.45 70.35,628.40 69.30,626.23 68.50,623.95 69.30,621.67 70.35,619.50 72.52,618.45" fill="#fff" fill-opacity=".25"/><text x="74.80" y="627.70" text-anchor="middle" font-size="10.8" font-weight="700" fill="#9d64ab" stroke="#9d64ab" stroke-width=".7" font-family='"Liberation Sans", sans-serif'>S</text><rect x="170.70" y="617.65" width="12.1" height="3.1" rx="1" fill="#e8e8e8"/><rect x="170.70" y="621.75" width="12.1" height="3.1" rx=".6" fill="#e0e0e0"/><rect x="170.70" y="625.85" width="12.1" height="3.5" rx="1" fill="#e0e0e0"/><g transform="translate(64.60 590.05)"><circle cx="10" cy="10" r="9.45" fill="#9d63ac"/><path fill="#1a1a1a" d="M9.5 1.75 Q6.7 5.6 7.15 11.7 Q4.2 11 1.75 9.2 A8.3 8.3 0 0 1 9.5 1.75Z"/><path fill="#1a1a1a" d="M7.8 13.2 Q13.1 13.7 18 10.5 A8 8 0 0 1 10.7 17.8 Q8.2 16.2 7.8 13.2Z"/></g><polygon points="333.70,399.10 335.98,399.90 338.15,400.95 339.20,403.12 340.00,405.40 339.20,407.68 338.15,409.85 335.98,410.90 333.70,411.70 331.42,410.90 329.25,409.85 328.20,407.68 327.40,405.40 328.20,403.12 329.25,400.95 331.42,399.90" fill="#fff" fill-opacity=".25"/><text x="333.70" y="409.15" text-anchor="middle" font-size="10.8" font-weight="700" fill="#348bbf" stroke="#348bbf" stroke-width=".7" font-family='"Liberation Sans", sans-serif'>S</text><rect x="347.40" y="399.30" width="11.8" height="11.6" rx="1.3" fill="#fff" fill-opacity=".28"/><path transform="translate(347.40 399.30)" d="M1.5 9.7 L4 6.4 L5.6 8.5 L7.5 5.6 L10.4 9.7Z" fill="#348bbf" fill-opacity=".9"/><rect x="429.60" y="399.10" width="12.1" height="3.1" rx="1" fill="#e8e8e8"/><rect x="429.60" y="403.20" width="12.1" height="3.1" rx=".6" fill="#e0e0e0"/><rect x="429.60" y="407.30" width="12.1" height="3.5" rx="1" fill="#e0e0e0" fill-opacity=".38"/><circle cx="333.50" cy="381.50" r="9.1" fill="#6ab0ec" stroke="#e9f3fd" stroke-width="1.4"/><circle cx="331.10" cy="378.80" r="2.6" fill="#eef6ff"/><polygon points="832.10,395.90 834.38,396.70 836.55,397.75 837.60,399.92 838.40,402.20 837.60,404.48 836.55,406.65 834.38,407.70 832.10,408.50 829.82,407.70 827.65,406.65 826.60,404.48 825.80,402.20 826.60,399.92 827.65,397.75 829.82,396.70" fill="#fff" fill-opacity=".25"/><text x="832.10" y="405.95" text-anchor="middle" font-size="10.8" font-weight="700" fill="#9b8424" stroke="#9b8424" stroke-width=".7" font-family='"Liberation Sans", sans-serif'>S</text><rect x="928.00" y="395.90" width="12.1" height="3.1" rx="1" fill="#e8e8e8"/><rect x="928.00" y="400.00" width="12.1" height="3.1" rx=".6" fill="#e0e0e0"/><rect x="928.00" y="404.10" width="12.1" height="3.5" rx="1" fill="#e0e0e0"/><path d="M823.85 373.46 L824.35 373.30 L824.85 373.10 L825.35 372.88 L825.85 372.68 L826.35 372.52 L826.85 372.42 L827.35 372.38 L827.85 372.42 L828.35 372.52 L828.85 372.68 L829.35 372.88 L829.85 373.10 L830.35 373.30 L830.85 373.46 L831.35 373.58 L831.85 373.62 L832.35 373.59 L832.85 373.49 L833.35 373.33 L833.85 373.14 L834.35 372.93 L834.85 372.72 L835.35 372.55 L835.85 372.43 L836.35 372.38 L836.85 372.40 L837.35 372.50 L837.85 372.65 L838.35 372.84 L838.85 373.05 L839.35 373.26 L839.85 373.43 L840.15 373.52" fill="none" stroke="#e0c223" stroke-width="1.75" stroke-linejoin="round"/><path d="M823.85 377.18 L824.35 377.02 L824.85 376.82 L825.35 376.60 L825.85 376.40 L826.35 376.24 L826.85 376.14 L827.35 376.10 L827.85 376.14 L828.35 376.24 L828.85 376.40 L829.35 376.60 L829.85 376.82 L830.35 377.02 L830.85 377.18 L831.35 377.30 L831.85 377.34 L832.35 377.31 L832.85 377.21 L833.35 377.05 L833.85 376.86 L834.35 376.65 L834.85 376.44 L835.35 376.27 L835.85 376.15 L836.35 376.10 L836.85 376.12 L837.35 376.22 L837.85 376.37 L838.35 376.56 L838.85 376.77 L839.35 376.98 L839.85 377.15 L840.15 377.24" fill="none" stroke="#c2c2c2" stroke-width="1.75" stroke-linejoin="round"/><path d="M823.85 380.90 L824.35 380.74 L824.85 380.54 L825.35 380.32 L825.85 380.12 L826.35 379.96 L826.85 379.86 L827.35 379.82 L827.85 379.86 L828.35 379.96 L828.85 380.12 L829.35 380.32 L829.85 380.54 L830.35 380.74 L830.85 380.90 L831.35 381.02 L831.85 381.06 L832.35 381.03 L832.85 380.93 L833.35 380.77 L833.85 380.58 L834.35 380.37 L834.85 380.16 L835.35 379.99 L835.85 379.87 L836.35 379.82 L836.85 379.84 L837.35 379.94 L837.85 380.09 L838.35 380.28 L838.85 380.49 L839.35 380.70 L839.85 380.87 L840.15 380.96" fill="none" stroke="#c2c2c2" stroke-width="1.75" stroke-linejoin="round"/><path d="M823.85 384.62 L824.35 384.46 L824.85 384.26 L825.35 384.04 L825.85 383.84 L826.35 383.68 L826.85 383.58 L827.35 383.54 L827.85 383.58 L828.35 383.68 L828.85 383.84 L829.35 384.04 L829.85 384.26 L830.35 384.46 L830.85 384.62 L831.35 384.74 L831.85 384.78 L832.35 384.75 L832.85 384.65 L833.35 384.49 L833.85 384.30 L834.35 384.09 L834.85 383.88 L835.35 383.71 L835.85 383.59 L836.35 383.54 L836.85 383.56 L837.35 383.66 L837.85 383.81 L838.35 384.00 L838.85 384.21 L839.35 384.42 L839.85 384.59 L840.15 384.68" fill="none" stroke="#c2c2c2" stroke-width="1.75" stroke-linejoin="round"/><polygon points="650.10,457.90 652.38,458.70 654.55,459.75 655.60,461.92 656.40,464.20 655.60,466.48 654.55,468.65 652.38,469.70 650.10,470.50 647.82,469.70 645.65,468.65 644.60,466.48 643.80,464.20 644.60,461.92 645.65,459.75 647.82,458.70" fill="#fff" fill-opacity=".25"/><text x="650.10" y="467.95" text-anchor="middle" font-size="10.8" font-weight="700" fill="#747474" stroke="#747474" stroke-width=".7" font-family='"Liberation Sans", sans-serif'>S</text><rect x="663.80" y="458.10" width="11.8" height="11.6" rx="1.3" fill="#fff" fill-opacity=".28"/><path transform="translate(663.80 458.10)" d="M1.5 9.7 L4 6.4 L5.6 8.5 L7.5 5.6 L10.4 9.7Z" fill="#747474" fill-opacity=".9"/><rect x="746.00" y="457.90" width="12.1" height="3.1" rx="1" fill="#e8e8e8"/><rect x="746.00" y="462.00" width="12.1" height="3.1" rx=".6" fill="#e0e0e0"/><rect x="746.00" y="466.10" width="12.1" height="3.5" rx="1" fill="#e0e0e0" fill-opacity=".38"/><g transform="translate(639.90 430.30)"><circle cx="10" cy="10" r="9.45" fill="#ababab"/><path fill="#1a1a1a" d="M9.5 1.75 Q6.7 5.6 7.15 11.7 Q4.2 11 1.75 9.2 A8.3 8.3 0 0 1 9.5 1.75Z"/><path fill="#1a1a1a" d="M7.8 13.2 Q13.1 13.7 18 10.5 A8 8 0 0 1 10.7 17.8 Q8.2 16.2 7.8 13.2Z"/></g><polygon points="828.90,564.30 831.18,565.10 833.35,566.15 834.40,568.32 835.20,570.60 834.40,572.88 833.35,575.05 831.18,576.10 828.90,576.90 826.62,576.10 824.45,575.05 823.40,572.88 822.60,570.60 823.40,568.32 824.45,566.15 826.62,565.10" fill="#fff" fill-opacity=".25"/><text x="828.90" y="574.35" text-anchor="middle" font-size="10.8" font-weight="700" fill="#9d64ab" stroke="#9d64ab" stroke-width=".7" font-family='"Liberation Sans", sans-serif'>S</text><rect x="924.80" y="564.30" width="12.1" height="3.1" rx="1" fill="#e8e8e8"/><rect x="924.80" y="568.40" width="12.1" height="3.1" rx=".6" fill="#e0e0e0"/><rect x="924.80" y="572.50" width="12.1" height="3.5" rx="1" fill="#e0e0e0"/><g transform="translate(818.70 536.70)"><circle cx="10" cy="10" r="9.45" fill="#9d63ac"/><path fill="#1a1a1a" d="M9.5 1.75 Q6.7 5.6 7.15 11.7 Q4.2 11 1.75 9.2 A8.3 8.3 0 0 1 9.5 1.75Z"/><path fill="#1a1a1a" d="M7.8 13.2 Q13.1 13.7 18 10.5 A8 8 0 0 1 10.7 17.8 Q8.2 16.2 7.8 13.2Z"/></g></svg>
<div id="minimap"><svg class="full" width="186" height="90" style="left:-2px;top:-2px"><rect x="46.9" y="6.6" width="18.9" height="8.8" fill="#3d3d3d"/><rect x="46.9" y="25.6" width="18.9" height="8.8" fill="#3d3d3d"/><rect x="82.8" y="8.4" width="18.9" height="20.6" fill="#27465a"/><rect x="121.5" y="18.5" width="18.9" height="20.6" fill="#27465a"/><rect x="157.4" y="30.9" width="18.9" height="29.4" fill="#3a3c60"/><rect x="10.5" y="45.7" width="18.9" height="8.8" fill="#3d3d3d"/><rect x="10.1" y="64.0" width="18.9" height="8.8" fill="#3d3d3d"/><rect x="6.5" y="81.2" width="18.9" height="8.8" fill="#4b3652"/><rect x="45.3" y="48.4" width="18.9" height="23.5" fill="#27465a"/><rect x="120.2" y="47.9" width="18.9" height="14.7" fill="#4a4325"/><rect x="92.9" y="57.2" width="18.9" height="8.8" fill="#3d3d3d"/><rect x="119.7" y="73.2" width="18.9" height="8.8" fill="#4b3652"/></svg></div>
</div>
<div id="menubar">
<svg class="ic" style="left:6px;top:5.8px" width="14" height="11" viewBox="0 0 14 11"><path d="M0 1.3H14M0 5.25H14M0 9.2H14" stroke="#fff" stroke-width="2.6"/></svg>
<span class="t" style="left:29.70px;top:11.00px;font-size:11.5px;color:#b9b9b9;transform:scaleX(0.9267);transform-origin:0 0;">Create</span>
<span class="t" style="left:76.00px;top:11.00px;font-size:11.5px;color:#b9b9b9;transform:scaleX(0.9229);transform-origin:0 0;">Edit</span>
<span class="t" style="left:109.20px;top:11.00px;font-size:11.5px;color:#b9b9b9;transform:scaleX(0.9386);transform-origin:0 0;">View</span>
<span class="t" style="left:147.40px;top:11.00px;font-size:11.5px;color:#b9b9b9;letter-spacing:-0.200px;">Node</span>
<span class="t" style="left:188.10px;top:11.00px;font-size:11.5px;color:#b9b9b9;transform:scaleX(0.8837);transform-origin:0 0;">Assets</span>
<span class="t" style="left:233.50px;top:11.00px;font-size:11.5px;color:#b9b9b9;letter-spacing:-0.318px;">Debug</span>
<span class="t" style="left:280.40px;top:11.00px;font-size:11.5px;color:#b9b9b9;letter-spacing:-0.045px;">Mode</span>
<svg class="ic" style="left:1200px;top:2px" width="78" height="18" viewBox="0 0 78 18" fill="none" stroke="#8c8c8c" stroke-width="1.5"><rect x="2.85" y="2.6" width="12.3" height="12.6" rx="1.8"/><path d="M6.6 2.6V15.2" /><rect x="22.75" y="2.6" width="12.3" height="12.6" rx="1.8"/><path d="M31.55 2.6V15.2"/><rect x="44.55" y="8.35" width="8.8" height="7.2" rx="1.3"/><path d="M45.85 8.2V5.85A3.25 3.25 0 0 1 52.3 5.2"/><circle cx="48.95" cy="11.6" r="1.1" fill="#8c8c8c" stroke="none"/><path d="M66.6 3.25H64.3a1.1 1.1 0 0 0 -1.1 1.1V13.1a1.1 1.1 0 0 0 1.1 1.1H72.7a1.1 1.1 0 0 0 1.1 -1.1V9.9"/><path d="M66.4 11.1L73.6 3.6M68.5 3.25H73.85V7.7"/></svg>
</div><div id="sep"></div>
<div id="toolbar">
<svg class="ic" style="left:5px;top:5px" width="18" height="18" viewBox="0 0 18 18"><path d="M9 1V17M1 9H17" stroke="#8a8a8a" stroke-width="2"/></svg>
<svg class="ic" style="left:30px;top:7px" width="20" height="14" viewBox="0 0 20 14"><path d="M1.7 1.8H13.6L18.2 7L13.6 12.2H1.7Z" fill="none" stroke="#8a8a8a" stroke-width="1.4" stroke-linejoin="round"/></svg>
<span class="t" style="left:59.00px;top:15.00px;font-size:11px;color:#ffffff;letter-spacing:0.002px;">demo_mat</span>
</div>
<div id="search"><svg class="ic" style="left:11px;top:3px" width="14" height="13" viewBox="0 0 14 13"><circle cx="5.1" cy="4.8" r="3.4" fill="none" stroke="#c0c0c0" stroke-width="1.3"/><path d="M7.6 7.4L12.4 11.8" stroke="#c0c0c0" stroke-width="1.6"/></svg>
<span class="t" style="left:33.10px;top:10.00px;font-size:11.5px;color:#ababab;transform:scaleX(0.8545);transform-origin:0 0;">Reveal</span>
</div>
<svg class="full" width="1278" height="688" style="pointer-events:none"><path d="M0 681 A7 7 0 0 0 7 688 H0Z" fill="#0d0d0d"/><path d="M0 681 A7 7 0 0 0 7 688" fill="none" stroke="#4a4a4a" stroke-width="1"/><path d="M1278 681 A7 7 0 0 1 1271 688 H1278Z" fill="#8a6843"/><path d="M1278 681 A7 7 0 0 1 1271 688" fill="none" stroke="#555" stroke-width="1"/></svg>
</body></html>
